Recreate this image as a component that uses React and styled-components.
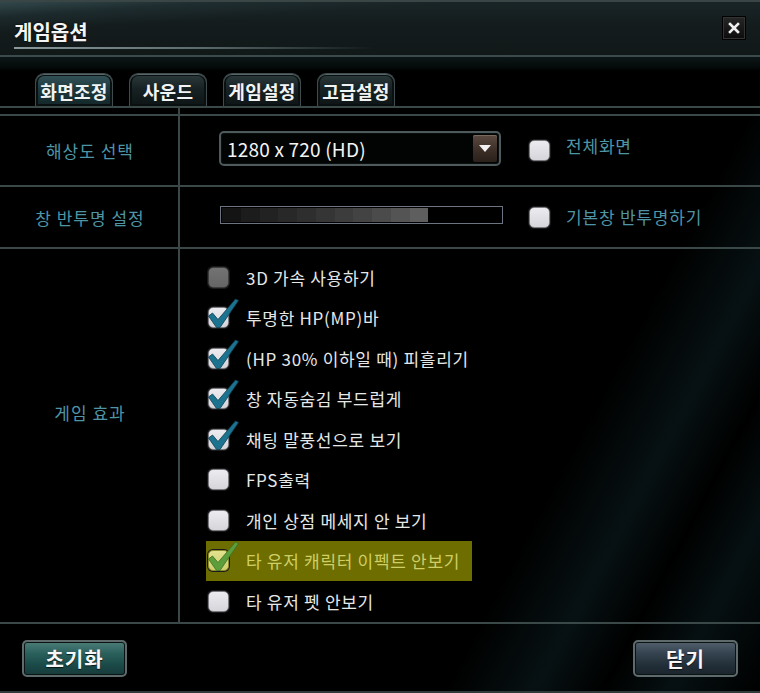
import React from 'react'
import styled, { createGlobalStyle } from 'styled-components'

const GlobalStyle = createGlobalStyle`
  html, body {
    margin: 0;
    padding: 0;
    background: #000;
  }
  body {
    font-family: 'Noto Sans CJK KR', 'Noto Sans', sans-serif;
  }
`

const tabs = ['화면조정', '사운드', '게임설정', '고급설정']

const effects = [
  { label: '3D 가속 사용하기', state: 'disabled' },
  { label: '투명한 HP(MP)바', state: 'checked' },
  { label: '(HP 30% 이하일 때) 피흘리기', state: 'checked' },
  { label: '창 자동숨김 부드럽게', state: 'checked' },
  { label: '채팅 말풍선으로 보기', state: 'checked' },
  { label: 'FPS출력', state: 'off' },
  { label: '개인 상점 메세지 안 보기', state: 'off' },
  { label: '타 유저 캐릭터 이펙트 안보기', state: 'checked', highlight: true },
  { label: '타 유저 펫 안보기', state: 'off' },
]

// opacity slider steps, dark to light
const sliderSteps = ['#141414', '#1c1c1c', '#222', '#282828', '#2e2e2e', '#353535', '#3c3c3c', '#434343', '#4b4b4b', '#545454', '#5e5e5e']

const CheckMark = ({ highlight }) => (
  <CheckSvg viewBox="-2 -9 34 32" width="34" height="32">
    <path
      d="M0.5 9 L4.5 6 L10 12.5 L27.5 -8 L30.5 -6.5 L12 20.5 L8.5 20.5 Z"
      fill={highlight ? '#5c9e3c' : '#1c7390'}
      stroke={highlight ? '#3e6e22' : '#0e3e50'}
      strokeWidth="0.8"
      strokeLinejoin="round"
    />
  </CheckSvg>
)

const Checkbox = ({ state = 'off', highlight }) => (
  <Box $state={state} $highlight={highlight}>
    {state === 'checked' && <CheckMark highlight={highlight} />}
  </Box>
)

const App = () => {
  return (
    <>
      <GlobalStyle />
      <Window>
        <TitleBar>
          <TitleText>게임옵션</TitleText>
          <TitleRule />
          <CloseButton>
            <svg width="12" height="12" viewBox="0 0 12 12">
              <path d="M2 2 L10 10 M10 2 L2 10" stroke="#eeeeee" strokeWidth="2.6" strokeLinecap="square" />
            </svg>
          </CloseButton>
        </TitleBar>

        <TabBar>
          {tabs.map((t, i) => (
            <Tab key={t} $active={i === 0}>
              {t}
            </Tab>
          ))}
        </TabBar>

        <Table>
          <Spacer />
          <Spacer $right />

          <LabelCell $h={71}>해상도 선택</LabelCell>
          <ValueCell>
            <Select>
              <SelectText>1280 x 720 (HD)</SelectText>
              <SelectArrow>
                <svg width="14" height="9" viewBox="0 0 14 9">
                  <path d="M1 1 L13 1 L7 8 Z" fill="#f2f2f2" />
                </svg>
              </SelectArrow>
            </Select>
            <Checkbox />
            <OptionLabel $raise={10}>전체화면</OptionLabel>
          </ValueCell>

          <LabelCell $h={62}>창 반투명 설정</LabelCell>
          <ValueCell>
            <Slider>
              <SliderFill>
                {sliderSteps.map((c) => (
                  <SliderStep key={c} style={{ background: c }} />
                ))}
              </SliderFill>
            </Slider>
            <Checkbox />
            <OptionLabel $raise={2}>기본창 반투명하기</OptionLabel>
          </ValueCell>

          <LabelCell $lift={46}>게임 효과</LabelCell>
          <EffectList>
            {effects.map((e) => (
              <EffectRow key={e.label} $highlight={e.highlight}>
                <Checkbox state={e.state} highlight={e.highlight} />
                <EffectText $highlight={e.highlight}>{e.label}</EffectText>
              </EffectRow>
            ))}
          </EffectList>
        </Table>

        <Footer>
          <Button $variant="teal">초기화</Button>
          <Button $variant="slate">닫기</Button>
        </Footer>
      </Window>
    </>
  )
}

export default App

const Window = styled.div`
  width: 760px;
  height: 693px;
  display: flex;
  flex-direction: column;
  background: linear-gradient(118deg, #000 0%, #000 72%, #071113 80%, #000 86%, #061012 92%, #000 100%);
  box-sizing: border-box;
  border-bottom: 2px solid #2f3b3b;
  overflow: hidden;
`

const TitleBar = styled.div`
  position: relative;
  height: 57px;
  flex-shrink: 0;
  box-sizing: border-box;
  border-top: 2px solid #3a4646;
  border-bottom: 2px solid #3b4a4a;
  background:
    linear-gradient(176deg, rgba(70, 100, 104, 0.55) 0%, rgba(40, 62, 66, 0.35) 14%, rgba(0, 0, 0, 0) 30%),
    linear-gradient(to bottom, #1a2527 0%, #141c1d 40%, #111818 100%);
  padding: 16px 0 0 14px;
`

const TitleText = styled.div`
  font-size: 20px;
  font-weight: 700;
  color: #f4f6f6;
  line-height: 27px;
  text-shadow: 0 0 2px rgba(0, 0, 0, 0.8);
`

const TitleRule = styled.div`
  margin-top: 2px;
  width: 360px;
  height: 2px;
  background: linear-gradient(to right, #8a9a9c 0%, #5e6e70 50%, rgba(60, 80, 82, 0) 100%);
`

const CloseButton = styled.div`
  position: absolute;
  top: 14px;
  right: 14px;
  width: 22px;
  height: 22px;
  display: flex;
  align-items: center;
  justify-content: center;
  background: linear-gradient(to bottom, #262626, #0c0c0c);
  border: 1px solid #000;
  box-shadow: inset 0 0 0 1px #333;
`

const TabBar = styled.div`
  height: 49px;
  flex-shrink: 0;
  display: flex;
  align-items: flex-end;
  gap: 16px;
  padding-left: 35px;
  box-sizing: border-box;
  background: linear-gradient(to bottom, #0c1616 0px, #050a0a 10px, #000 14px);
`

const Tab = styled.div`
  width: 78px;
  height: 33px;
  box-sizing: border-box;
  display: flex;
  align-items: center;
  justify-content: center;
  border: 1px solid #3f4b4c;
  border-bottom: none;
  border-radius: 9px 9px 0 0;
  box-shadow: inset 0 1px 0 #56666a, inset 0 0 0 2px #0a1010;
  background: ${(p) =>
    p.$active
      ? 'linear-gradient(to bottom, #34545a 0%, #1e3a3f 45%, #132628 100%)'
      : 'linear-gradient(to bottom, #2c3a3c 0%, #182224 45%, #0d1415 100%)'};
  color: #f2f4f4;
  font-size: 18px;
  font-weight: 700;
  letter-spacing: 0.3px;
  padding-top: 2px;
`

const Table = styled.div`
  display: grid;
  grid-template-columns: 180px 1fr;
  border-top: 2px solid #3a4848;
`

const Spacer = styled.div`
  height: 6px;
  border-bottom: 2px solid #3a4848;
  ${(p) => (p.$right ? '' : 'border-right: 2px solid #3a4848;')}
`

const LabelCell = styled.div`
  ${(p) => (p.$h ? `height: ${p.$h}px;` : '')}
  box-sizing: border-box;
  display: flex;
  align-items: center;
  justify-content: center;
  border-right: 2px solid #3a4848;
  border-bottom: 2px solid #3a4848;
  color: #4f95a6;
  font-size: 17px;
  letter-spacing: 1px;
  padding: 0 0 ${(p) => p.$lift || 0}px 2px;
`

const ValueCell = styled.div`
  display: flex;
  align-items: center;
  padding-left: 39px;
  border-bottom: 2px solid #3a4848;
`

const Select = styled.div`
  width: 282px;
  height: 35px;
  box-sizing: border-box;
  margin: -4px 28px 0 0;
  display: flex;
  align-items: center;
  justify-content: space-between;
  border: 2px solid #4e5a5c;
  border-radius: 5px;
  box-shadow: inset 0 0 0 1px #0a0f10;
  background: #020404;
  padding: 0 2px 0 6px;
`

const SelectText = styled.span`
  color: #f4f4f4;
  font-size: 19px;
  letter-spacing: 0.2px;
`

const SelectArrow = styled.div`
  width: 24px;
  height: 27px;
  display: flex;
  align-items: center;
  justify-content: center;
  border-radius: 2px;
  background: linear-gradient(to bottom, #5b4a40 0%, #3a2d26 60%, #2a201b 100%);
  box-shadow: inset 0 1px 0 #7a6a5e;
`

const Slider = styled.div`
  width: 283px;
  height: 18px;
  box-sizing: border-box;
  margin: -4px 26px 0 1px;
  border: 1px solid #6c7482;
  background: #000;
  padding: 1px;
`

const SliderFill = styled.div`
  width: 74%;
  height: 100%;
  display: flex;
`

const SliderStep = styled.div`
  flex: 1;
`

const Box = styled.div`
  position: relative;
  width: 21px;
  height: 21px;
  box-sizing: border-box;
  flex-shrink: 0;
  border-radius: 5px;
  border: 1px solid
    ${(p) => (p.$state === 'disabled' ? '#3c3c3c' : p.$highlight ? '#8c8c30' : '#7a7a80')};
  background: ${(p) =>
    p.$state === 'disabled'
      ? 'linear-gradient(to bottom, #737373, #656565)'
      : p.$highlight
        ? 'linear-gradient(to bottom, #e2e290, #cfcf6e)'
        : 'linear-gradient(to bottom, #ececf0, #d6d6da)'};
  box-shadow: 0 0 0 1px #1a1a1a;
`

const CheckSvg = styled.svg`
  position: absolute;
  left: -3px;
  top: -10px;
  overflow: visible;
`

const OptionLabel = styled.span`
  margin-left: 16px;
  margin-bottom: ${(p) => p.$raise}px;
  color: #4f95a6;
  font-size: 17px;
  letter-spacing: 0.8px;
`

const EffectList = styled.div`
  display: flex;
  flex-direction: column;
  align-items: flex-start;
  padding: 8px 0 0 26px;
  border-bottom: 2px solid #3a4848;
`

const EffectRow = styled.div`
  height: 40.5px;
  display: flex;
  align-items: center;
  gap: 17px;
  padding: 0 12px 0 2px;
  box-sizing: border-box;
  background: ${(p) => (p.$highlight ? '#6d6d00' : 'transparent')};
`

const EffectText = styled.span`
  color: ${(p) => (p.$highlight ? '#cfcf66' : '#e6e8e8')};
  font-size: 17px;
  letter-spacing: 0.7px;
`

const Footer = styled.div`
  flex: 1;
  display: flex;
  justify-content: space-between;
  align-items: flex-start;
  padding: 16px 22px 0;
`

const Button = styled.div`
  width: 105px;
  height: 37px;
  box-sizing: border-box;
  display: flex;
  align-items: center;
  justify-content: center;
  border: 2px solid #5e6a6c;
  border-radius: 5px;
  box-shadow: inset 0 0 0 1px #0a1212;
  background: ${(p) =>
    p.$variant === 'teal'
      ? 'linear-gradient(to bottom, #4c7c78 0%, #2a605c 35%, #1a4a48 70%, #163a3a 100%)'
      : 'linear-gradient(to bottom, #51606c 0%, #34434f 35%, #222f38 70%, #1a242c 100%)'};
  color: #f6f8f8;
  font-size: 20px;
  font-weight: 700;
  letter-spacing: 1px;
  text-shadow: 0 1px 1px rgba(0, 0, 0, 0.7);
`
